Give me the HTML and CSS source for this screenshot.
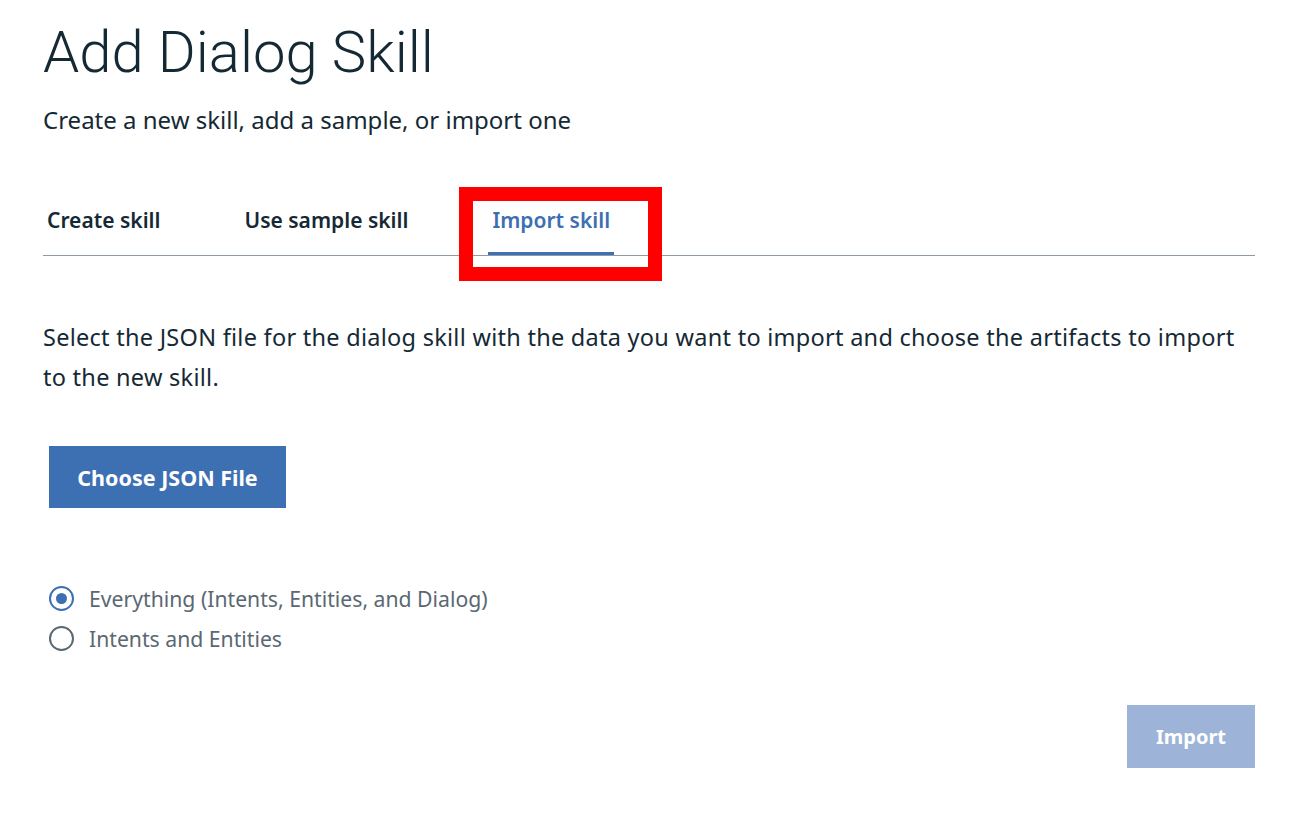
FILE: index.html
```html
<!DOCTYPE html>
<html lang="en">
<head>
<meta charset="utf-8">
<title>Add Dialog Skill</title>
<link rel="stylesheet" href="styles.css">
</head>
<body>
<main class="page">
  <h1 class="title">Add Dialog Skill</h1>
  <p class="subtitle">Create a new skill, add a sample, or import one</p>

  <nav class="tabs">
    <div class="tab">Create skill</div>
    <div class="tab">Use sample skill</div>
    <div class="tab tab-active">
      <span class="tab-label">Import skill</span>
      <span class="highlight"></span>
    </div>
  </nav>

  <p class="intro">Select the JSON file for the dialog skill with the data you want to import and choose the artifacts to import to the new skill.</p>

  <button class="btn-primary" type="button">Choose JSON File</button>

  <div class="radios">
    <label class="radio">
      <span class="radio-circle radio-checked"><span class="radio-dot"></span></span>
      <span class="radio-text">Everything (Intents, Entities, and Dialog)</span>
    </label>
    <label class="radio">
      <span class="radio-circle"></span>
      <span class="radio-text">Intents and Entities</span>
    </label>
  </div>

  <div class="footer">
    <button class="btn-disabled" type="button">Import</button>
  </div>
</main>
</body>
</html>
```

FILE: styles.css
```css
html, body {
  margin: 0;
  padding: 0;
  background: #ffffff;
}

body {
  font-family: "Noto Sans", "Open Sans", "Liberation Sans", sans-serif;
  color: #152935;
}

.page {
  width: 1212px;
  padding: 0 0 0 43px;
  display: flex;
  flex-direction: column;
}

.title {
  margin: 14px 0 0 0;
  font-family: Roboto, "Noto Sans", sans-serif;
  font-size: 58px;
  font-weight: 300;
  line-height: 76px;
  letter-spacing: 0;
}

.subtitle {
  margin: 15px 0 0 0;
  font-size: 24px;
  line-height: 30px;
  font-weight: 400;
}

.tabs {
  margin-top: 65px;
  display: flex;
  gap: 76px;
  border-bottom: 1px solid #8c9ba5;
  height: 55px;
}

.tab {
  position: relative;
  padding: 7px 4px 0 4px;
  font-size: 21px;
  font-weight: 600;
  line-height: 26px;
  color: #152935;
}

.tab-active {
  color: #3d70b2;
  border-bottom: 3px solid #3d70b2;
  height: 55px;
  box-sizing: border-box;
}

.highlight {
  position: absolute;
  left: -29px;
  top: -13px;
  width: 175px;
  height: 66px;
  border: 14px solid #ff0000;
}

.intro {
  margin: 61px 0 0 0;
  font-size: 23.5px;
  letter-spacing: 0.27px;
  line-height: 40px;
  max-width: 1212px;
}

.btn-primary {
  align-self: flex-start;
  margin: 49px 0 0 6px;
  width: 237px;
  height: 62px;
  border: 0;
  background: #3d70b2;
  color: #ffffff;
  font-family: "Noto Sans", "Open Sans", "Liberation Sans", sans-serif;
  font-size: 21.5px;
  font-weight: 700;
  padding: 0;
}

.radios {
  margin-top: 77px;
  display: flex;
  flex-direction: column;
  gap: 13px;
}

.radio {
  display: flex;
  align-items: center;
  gap: 15px;
  padding-left: 6px;
  height: 27px;
}

.radio-circle {
  width: 21px;
  height: 21px;
  border: 2.5px solid #5a6872;
  border-radius: 50%;
  display: flex;
  align-items: center;
  justify-content: center;
}

.radio-checked {
  border-color: #3d70b2;
}

.radio-dot {
  width: 11px;
  height: 11px;
  border-radius: 50%;
  background: #3d70b2;
}

.radio-text {
  font-size: 21.2px;
  color: #5a6872;
}

.footer {
  display: flex;
  justify-content: flex-end;
  margin-top: 53px;
}

.btn-disabled {
  width: 128px;
  height: 63px;
  border: 0;
  padding: 0;
  background: #9db3d7;
  color: #ffffff;
  font-family: "Noto Sans", "Open Sans", "Liberation Sans", sans-serif;
  font-size: 20px;
  font-weight: 700;
}
```
